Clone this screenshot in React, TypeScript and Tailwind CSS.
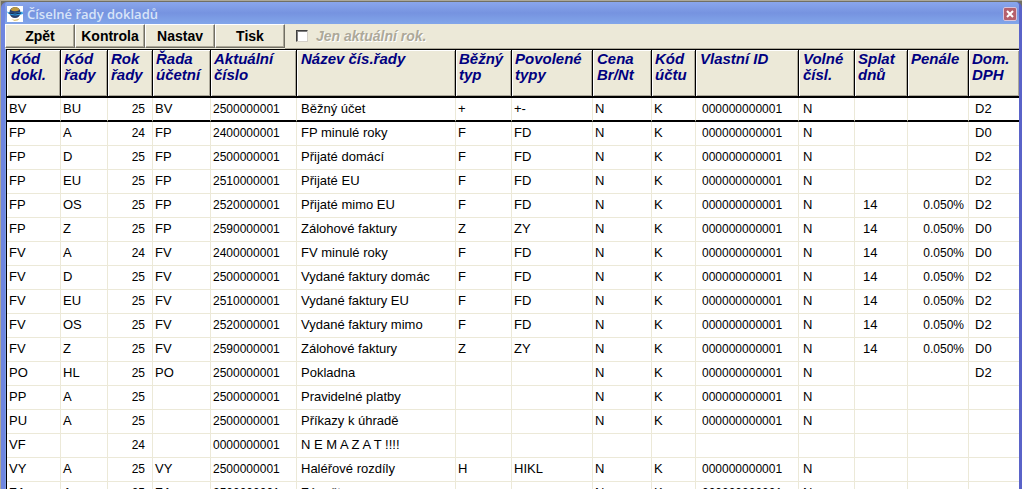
import type { ReactNode } from "react";

type Row = {
  doc: string;
  code: string;
  year: string;
  series: string;
  number: string;
  name: string;
  type: string;
  allowed: string;
  price: string;
  account: string;
  ownId: string;
  free: string;
  due: string;
  penalty: string;
  vat: string;
};

const columns: {
  key: keyof Row;
  title: string;
  width: string;
  head: string;
  cell: string;
}[] = [
  { key: "doc", title: "Kód dokl.", width: "w-[54px]", head: "pl-1", cell: "pl-0.5 text-[13px]" },
  { key: "code", title: "Kód řady", width: "w-[47px]", head: "pl-[3px]", cell: "pl-0.5 text-[13px]" },
  { key: "year", title: "Rok řady", width: "w-[45px]", head: "pl-[3px]", cell: "pr-[7px] text-right text-xs" },
  { key: "series", title: "Řada účetní", width: "w-[58px]", head: "pl-[3px]", cell: "pl-0.5 text-[13px]" },
  { key: "number", title: "Aktuální číslo", width: "w-[86px]", head: "pl-[3px]", cell: "pl-0.5 text-xs" },
  { key: "name", title: "Název čís.řady", width: "w-[159px]", head: "pl-1", cell: "pl-1 text-[13px]" },
  { key: "type", title: "Běžný typ", width: "w-[56px]", head: "pl-[3px]", cell: "pl-0.5 text-[13px]" },
  { key: "allowed", title: "Povolené typy", width: "w-[81px]", head: "pl-[3px]", cell: "pl-0.5 text-[13px]" },
  { key: "price", title: "Cena Br/Nt", width: "w-[59px]", head: "pl-1", cell: "pl-0.5 text-[13px]" },
  { key: "account", title: "Kód účtu", width: "w-[44px]", head: "pl-[3px]", cell: "pl-0.5 text-[13px]" },
  { key: "ownId", title: "Vlastní ID", width: "w-[103px]", head: "pl-1", cell: "pl-1.5 text-xs" },
  { key: "free", title: "Volné čísl.", width: "w-[56px]", head: "pl-1", cell: "pl-1 text-[13px]" },
  { key: "due", title: "Splat dnů", width: "w-[53px]", head: "pl-[3px]", cell: "pl-2 text-[13px]" },
  { key: "penalty", title: "Penále", width: "w-[61px]", head: "pl-[3px]", cell: "pr-1 text-right text-xs" },
  { key: "vat", title: "Dom. DPH", width: "w-auto", head: "pl-[3px]", cell: "pl-1.5 text-[13px]" },
];

const data: string[][] = [
  ["BV", "BU", "25", "BV", "2500000001", "Běžný účet", "+", "+-", "N", "K", "000000000001", "N", "", "", "D2"],
  ["FP", "A", "24", "FP", "2400000001", "FP minulé roky", "F", "FD", "N", "K", "000000000001", "N", "", "", "D0"],
  ["FP", "D", "25", "FP", "2500000001", "Přijaté domácí", "F", "FD", "N", "K", "000000000001", "N", "", "", "D2"],
  ["FP", "EU", "25", "FP", "2510000001", "Přijaté EU", "F", "FD", "N", "K", "000000000001", "N", "", "", "D2"],
  ["FP", "OS", "25", "FP", "2520000001", "Přijaté mimo EU", "F", "FD", "N", "K", "000000000001", "N", "14", "0.050%", "D2"],
  ["FP", "Z", "25", "FP", "2590000001", "Zálohové faktury", "Z", "ZY", "N", "K", "000000000001", "N", "14", "0.050%", "D0"],
  ["FV", "A", "24", "FV", "2400000001", "FV minulé roky", "F", "FD", "N", "K", "000000000001", "N", "14", "0.050%", "D0"],
  ["FV", "D", "25", "FV", "2500000001", "Vydané faktury domác", "F", "FD", "N", "K", "000000000001", "N", "14", "0.050%", "D2"],
  ["FV", "EU", "25", "FV", "2510000001", "Vydané faktury EU", "F", "FD", "N", "K", "000000000001", "N", "14", "0.050%", "D2"],
  ["FV", "OS", "25", "FV", "2520000001", "Vydané faktury mimo", "F", "FD", "N", "K", "000000000001", "N", "14", "0.050%", "D2"],
  ["FV", "Z", "25", "FV", "2590000001", "Zálohové faktury", "Z", "ZY", "N", "K", "000000000001", "N", "14", "0.050%", "D0"],
  ["PO", "HL", "25", "PO", "2500000001", "Pokladna", "", "", "N", "K", "000000000001", "N", "", "", "D2"],
  ["PP", "A", "25", "", "2500000001", "Pravidelné platby", "", "", "N", "K", "000000000001", "N", "", "", ""],
  ["PU", "A", "25", "", "2500000001", "Příkazy k úhradě", "", "", "N", "K", "000000000001", "N", "", "", ""],
  ["VF", "", "24", "", "0000000001", "N E M A Z A T !!!!", "", "", "", "", "", "", "", "", ""],
  ["VY", "A", "25", "VY", "2500000001", "Haléřové rozdíly", "H", "HIKL", "N", "K", "000000000001", "N", "", "", ""],
  ["ZA", "A", "25", "ZA", "2500000001", "Zápočty", "", "", "N", "K", "000000000001", "N", "", "", ""],
];

const rows = data.map(
  (values) => Object.fromEntries(columns.map((col, i) => [col.key, values[i]])) as Row
);

function ToolButton({ children }: { children: ReactNode }) {
  return (
    <button className="h-6 w-[70px] border border-t-white border-r-[#716f64] border-b-[#716f64] border-l-white pb-px text-center text-sm leading-5 font-bold shadow-[inset_-1px_-1px_#aca899]">
      {children}
    </button>
  );
}

function GlobeIcon() {
  return (
    <svg viewBox="0 0 16 16" className="size-4 bg-white" aria-hidden="true">
      <circle cx="8" cy="6.5" r="5.5" fill="#27406e" />
      <path d="M3.5 4 Q5 1 8.5 1 Q12 1.5 12.5 4 Q8 6.5 3.5 4" fill="#c09a3e" />
      <path d="M0 5.5 Q5 8.5 15.5 5.5 L16 8 Q7 11 1 7.5Z" fill="#2b9fe6" />
      <path d="M2 7 Q8 9 14 7" stroke="#14264d" fill="none" />
      <path d="M4 13 Q8 14.5 13 12.5 Q11 15 7.5 15Z" fill="#dfc477" />
    </svg>
  );
}

export default function App() {
  return (
    <div className="h-screen overflow-hidden border-t border-l border-[#aca899] bg-[#716f64] pt-px font-['Liberation_Sans',Arial,sans-serif] text-black">
      <div className="flex h-full flex-col rounded-t-md border-r-3 border-l-4 border-r-[#5a63c8] border-l-[#6f86e0] bg-[#7b9ce6]">
        {/* Title bar */}
        <header className="flex h-[22px] shrink-0 items-center gap-1 rounded-t-sm bg-linear-to-b from-[#8aa6ec] via-[#7693e0] to-[#82a6ea] px-0.5 pt-0.5">
          <GlobeIcon />
          <h1 className="flex-1 font-['Open_Sans',sans-serif] text-[13px] leading-5 font-semibold text-[#d8e4f8]">
            Číselné řady dokladů
          </h1>
          <button
            aria-label="Zavřít"
            className="flex size-3.5 items-center justify-center rounded-xs border border-[#d8c4dc] bg-[#b5606c] text-white"
          >
            <svg viewBox="0 0 10 10" className="size-2.5" aria-hidden="true">
              <path d="M2 2 L8 8 M8 2 L2 8" stroke="currentColor" strokeWidth="2" />
            </svg>
          </button>
        </header>

        {/* Toolbar */}
        <div className="flex h-[25px] shrink-0 bg-[#ece9d8]">
          <ToolButton>Zpět</ToolButton>
          <ToolButton>Kontrola</ToolButton>
          <ToolButton>Nastav</ToolButton>
          <ToolButton>Tisk</ToolButton>
          <label className="flex flex-1 items-center gap-2 border-b border-[#aca899] pl-[11px] text-sm font-bold text-[#aca899] italic text-shadow-[1px_1px_#ffffff]">
            <input
              type="checkbox"
              disabled
              className="size-3 appearance-none border border-t-[#404040] border-r-[#d4d0c8] border-b-[#d4d0c8] border-l-[#404040] bg-white shadow-[inset_1px_1px_#808080]"
            />
            Jen aktuální rok.
          </label>
        </div>

        {/* Document series */}
        <div className="ml-px min-h-0 flex-1 overflow-hidden border-t border-l border-black bg-white">
          <table className="w-full table-fixed border-separate border-spacing-0">
            <thead>
              <tr className="h-12 bg-[#ece9d8]">
                {columns.map((col) => (
                  <th
                    key={col.key}
                    className={`${col.width} ${col.head} border-r border-b-2 border-black pt-px text-left align-top text-[15px] leading-4 font-bold text-[#000080] italic shadow-[inset_1px_1px_#ffffff,inset_-1px_-1px_#aca899] last:border-r-0`}
                  >
                    {col.title}
                  </th>
                ))}
              </tr>
            </thead>
            <tbody>
              {rows.map((row, i) => (
                <tr key={i} className="h-6">
                  {columns.map((col) => (
                    <td
                      key={col.key}
                      className={`${col.cell} border-r border-r-[#ece9d8] pt-[3px] align-top leading-4 whitespace-nowrap last:border-r-0 ${
                        i === 0 ? "border-b-2 border-b-black" : "border-b border-b-[#ece9d8]"
                      }`}
                    >
                      {row[col.key]}
                    </td>
                  ))}
                </tr>
              ))}
            </tbody>
          </table>
        </div>
      </div>
    </div>
  );
}
